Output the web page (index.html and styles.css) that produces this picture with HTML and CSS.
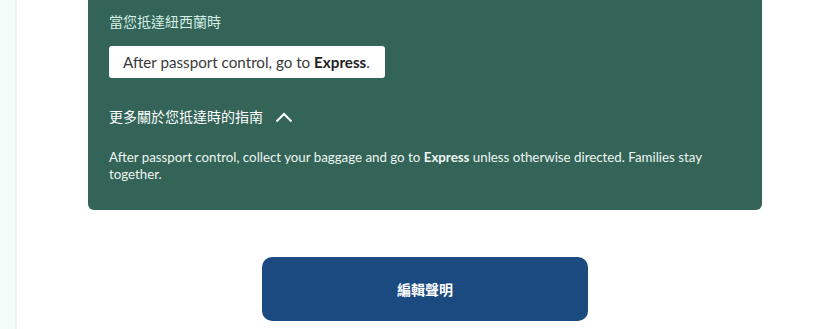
FILE: index.html
```html
<!DOCTYPE html>
<html lang="zh-Hant">
<head>
    <meta charset="UTF-8">
    <meta name="viewport" content="width=device-width, initial-scale=1.0">
    <title>抵達紐西蘭</title>
    <link rel="stylesheet" href="styles.css">
</head>
<body>
    <div class="page">
        <div class="side-strip"></div>
        <main class="main">
            <div class="content">
                <!-- Arrival instructions -->
                <section class="arrival-panel">
                    <h3 class="arrival-title">當您抵達紐西蘭時</h3>
                    <div class="lane-box">After passport control, go to <strong>Express</strong>.</div>

                    <button class="guide-toggle" type="button">
                        <span>更多關於您抵達時的指南</span>
                        <svg class="chevron" width="18" height="12" viewBox="0 0 18 12" aria-hidden="true">
                            <path d="M1.5 10.5 L9 3 L16.5 10.5" fill="none" stroke="#ffffff" stroke-width="2"/>
                        </svg>
                    </button>

                    <p class="guide-text">After passport control, collect your baggage and go to <strong>Express</strong> unless otherwise directed. Families stay together.</p>
                </section>

                <div class="actions">
                    <button class="edit-btn" type="button">編輯聲明</button>
                </div>
            </div>
        </main>
    </div>
</body>
</html>
```

FILE: styles.css
```css
/* Global Styles */
* { box-sizing: border-box; margin: 0; padding: 0; }
body {
    font-family: Lato, "Noto Sans CJK TC", sans-serif;
    background: #ffffff;
    color: #333;
    overflow: hidden;
}

.page {
    display: flex;
    min-height: 100vh;
}

.side-strip {
    width: 17px;
    background: #f2fcf9;
    border-right: 2px solid #eef3f1;
}

.main {
    flex: 1;
    background: #fff;
}

.content {
    width: 674px;
    margin-left: 71px;
}

.arrival-panel {
    margin-top: -20px;
    padding: 33px 21px 27px;
    background: #336457;
    border-radius: 6px;
    color: #fff;
}

.arrival-title {
    font-size: 14px;
    font-weight: normal;
    color: #d6efe7;
    line-height: 18px;
}

.lane-box {
    display: inline-block;
    margin-top: 15px;
    padding: 7px 15px 7px 14px;
    background: #fff;
    border-radius: 3px;
    color: #3a3a3a;
    font-size: 15.2px;
    line-height: 18px;
}
.lane-box strong { color: #222; }

.guide-toggle {
    display: flex;
    align-items: center;
    gap: 12px;
    margin-top: 30px;
    background: none;
    border: none;
    color: #fff;
    font-family: inherit;
    font-size: 14px;
    line-height: 18px;
    cursor: pointer;
}

.guide-text {
    margin-top: 23px;
    font-size: 13.3px;
    line-height: 17px;
    color: #eef5f2;
    padding-right: 20px;
}

.actions {
    display: flex;
    justify-content: center;
    margin-top: 47px;
}

.edit-btn {
    width: 326px;
    height: 64px;
    background: #1b4a80;
    color: #fff;
    border: none;
    border-radius: 10px;
    font-family: inherit;
    font-size: 14px;
    font-weight: bold;
    cursor: pointer;
}
```
